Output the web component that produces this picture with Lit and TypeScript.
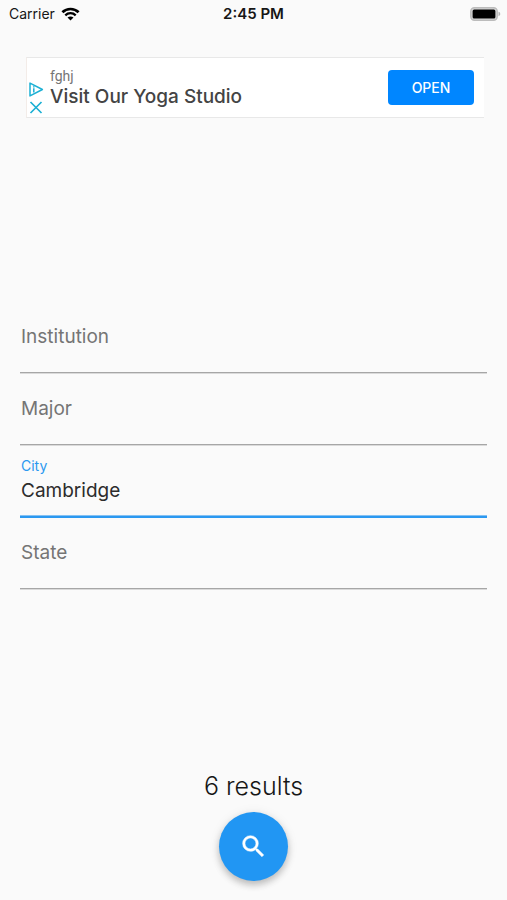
import { LitElement, html, css } from "lit";
import { customElement, property, state } from "lit/decorators.js";
import { classMap } from "lit/directives/class-map.js";

@customElement("status-bar")
class StatusBar extends LitElement {
  static styles = css`
    :host {
      display: grid;
      grid-template-columns: 1fr auto 1fr;
      align-items: center;
      height: 28px;
      padding: 0 6px;
      font-size: 14px;
      line-height: 20px;
      color: #161616;
    }
    .carrier {
      display: flex;
      align-items: center;
      gap: 6px;
      padding-left: 3px;
    }
    .time {
      font-size: 15px;
      font-weight: 600;
    }
    .battery {
      justify-self: end;
    }
    svg {
      display: block;
    }
  `;

  render() {
    return html`
      <span class="carrier">
        Carrier
        <svg width="19" height="14" viewBox="0 0 18 14" aria-label="Wi-Fi">
          <path d="M.9 5.300C5.400.9 12.600.9 17.100 5.300" fill="none" stroke="#000" stroke-width="2.700" />
          <path d="M3.800 8.300C6.700 5.500 11.300 5.500 14.200 8.300" fill="none" stroke="#000" stroke-width="2.300" />
          <path d="M9 13.600 6 10.600C7.700 9.100 10.300 9.100 12 10.600Z" />
        </svg>
      </span>
      <span class="time">2:45 PM</span>
      <svg class="battery" width="31" height="14" viewBox="0 0 31 14" aria-label="Battery">
        <rect x=".8" y=".8" width="26.400" height="12.400" rx="3.600" fill="#d8d8d8" stroke="#bcbcbc" stroke-width="1.500" />
        <rect x="2.600" y="2.400" width="22.800" height="9.200" rx="1.500" />
        <path d="M28.500 4.800c2.300.6 2.300 3.800 0 4.400z" fill="#b4b4b4" />
      </svg>
    `;
  }
}

@customElement("ad-banner")
class AdBanner extends LitElement {
  static styles = css`
    :host {
      display: flex;
      align-items: center;
      box-sizing: border-box;
      height: 61px;
      margin: 29px 23px 0 26px;
      padding: 0 10px 0 2px;
      background: #fff;
      border: 1px solid #e8e8e8;
      border-left-color: #f3ece8;
      border-right: 0;
    }
    .marks {
      display: flex;
      flex-direction: column;
      align-self: flex-end;
      gap: 4px;
      width: 15px;
      margin-bottom: 3px;
    }
    .mark {
      display: block;
      padding: 0;
      border: 0;
      background: none;
    }
    svg {
      display: block;
    }
    .copy {
      flex: 1;
      margin: 0 6px;
    }
    .advertiser {
      font: 14px/18px Roboto, sans-serif;
      color: #757575;
    }
    .headline {
      font-size: 19px;
      font-weight: 500;
      line-height: 24px;
      color: #444;
    }
    .open {
      width: 86px;
      height: 35px;
      padding: 0;
      border: 0;
      border-radius: 4px;
      background: #0086ff;
      color: #fff;
      font: inherit;
      font-size: 14px;
      font-weight: 500;
      line-height: 20px;
    }
  `;

  render() {
    return html`
      <div class="marks">
        <button class="mark" aria-label="About this ad">
          <svg width="15" height="15" viewBox="0 0 15 15" fill="none" stroke="#1cb0d4" stroke-width="1.500">
            <path d="M1 1.100V13.900L13.400 7.500Z" stroke-linejoin="round" />
            <path d="M4.800 4.300v1.200M4.800 6.300v4.200" />
          </svg>
        </button>
        <button class="mark" aria-label="Close ad">
          <svg width="15" height="13" viewBox="0 0 15 13" fill="none" stroke="#1cb0d4" stroke-width="1.700">
            <path d="M1.500 1 12.500 12M12.500 1 1.500 12" />
          </svg>
        </button>
      </div>
      <div class="copy">
        <div class="advertiser">fghj</div>
        <div class="headline">Visit Our Yoga Studio</div>
      </div>
      <button class="open">OPEN</button>
    `;
  }
}

@customElement("text-field")
class TextField extends LitElement {
  @property() label = "";
  @property() value = "";
  @property({ type: Boolean }) active = false;

  static styles = css`
    :host {
      display: block;
    }
    .field {
      display: flex;
      flex-direction: column;
      justify-content: flex-end;
      box-sizing: border-box;
      position: relative;
      height: 72px;
      padding-bottom: 12px;
      border-bottom: 1px solid #a6a6a6;
      box-shadow: 0 1px #dadada;
    }
    .active {
      border-bottom-color: #2b98f0;
      box-shadow: 0 1px #2b98f0, 0 -1px #85c1f3 inset;
    }
    .label {
      position: absolute;
      top: 23px;
      left: 1px;
      font-size: 19px;
      line-height: 26px;
      color: #757575;
      pointer-events: none;
    }
    .raised .label {
      top: 11px;
      font-size: 14px;
      line-height: 20px;
      color: #2b98f0;
    }
    .input {
      box-sizing: border-box;
      width: 100%;
      height: 26px;
      padding: 0 1px;
      border: 0;
      outline: 0;
      background: none;
      font: inherit;
      font-size: 19px;
      line-height: 26px;
      color: #2c2c2c;
    }
  `;

  private onInput(e: Event) {
    this.value = (e.target as HTMLInputElement).value;
  }

  render() {
    const classes = { field: true, active: this.active, raised: this.active || this.value !== "" };
    return html`
      <div
        class=${classMap(classes)}
        @focusin=${() => (this.active = true)}
        @focusout=${() => (this.active = false)}
      >
        <label class="label" for="control">${this.label}</label>
        <input class="input" id="control" type="text" .value=${this.value} @input=${this.onInput} />
      </div>
    `;
  }
}

@customElement("app-root")
class AppRoot extends LitElement {
  @state() private fields = [
    { label: "Institution", value: "", active: false },
    { label: "Major", value: "", active: false },
    { label: "City", value: "Cambridge", active: true },
    { label: "State", value: "", active: false },
  ];

  static styles = css`
    :host {
      display: flex;
      flex-direction: column;
      min-height: 100vh;
      background: #fafafa;
      font-family: Inter, "Liberation Sans", sans-serif;
    }
    .form {
      flex: 1;
      display: flex;
      flex-direction: column;
      justify-content: center;
      padding: 2px 20px 0;
    }
    .footer {
      display: flex;
      flex-direction: column;
      align-items: center;
      gap: 10px;
      padding-bottom: 19px;
    }
    .results {
      font-size: 25px;
      font-weight: 300;
      line-height: 32px;
      color: #161616;
    }
    .search {
      display: grid;
      place-items: center;
      width: 69px;
      height: 69px;
      padding: 0;
      border: 0;
      border-radius: 50%;
      background: #2196f3;
      box-shadow: 0 4px 7px rgba(0, 0, 0, 0.22), 0 1px 12px rgba(0, 0, 0, 0.08);
    }
  `;

  render() {
    return html`
      <status-bar></status-bar>
      <ad-banner></ad-banner>
      <form class="form" @submit=${(e: Event) => e.preventDefault()}>
        ${this.fields.map(
          (f) => html`<text-field .label=${f.label} .value=${f.value} .active=${f.active}></text-field>`
        )}
      </form>
      <footer class="footer">
        <div class="results">6 results</div>
        <button class="search" aria-label="Search">
          <svg width="29" height="29" viewBox="0 0 24 24" fill="#fff" stroke="#fff" stroke-width=".4">
            <path
              d="M15.500 14h-.79l-.28-.27A6.471 6.471 0 0 0 16 9.500 6.500 6.500 0 1 0 9.500 16c1.610 0 3.090-.59 4.230-1.570l.27.28v.79l5 4.990L20.490 19l-4.990-5zm-6 0C7.010 14 5 11.990 5 9.500S7.010 5 9.500 5 14 7.010 14 9.500 11.990 14 9.500 14z"
            />
          </svg>
        </button>
      </footer>
    `;
  }
}
